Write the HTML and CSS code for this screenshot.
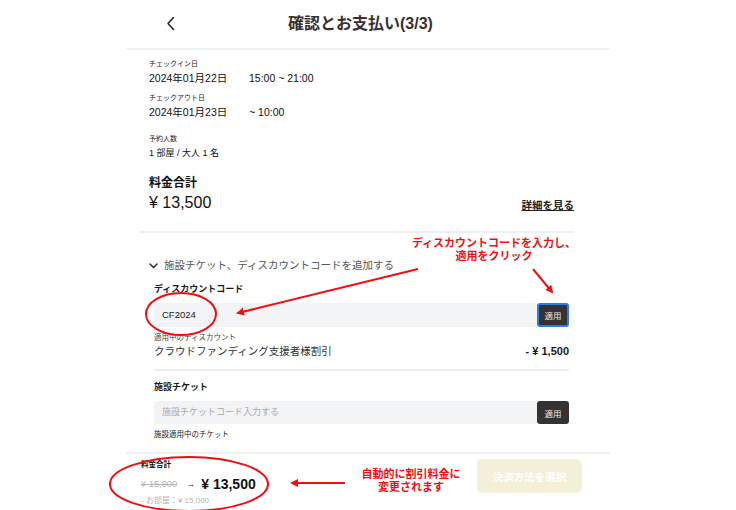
FILE: index.html
```html
<!DOCTYPE html>
<html lang="ja">
<head>
<meta charset="utf-8">
<title>確認とお支払い</title>
<link rel="stylesheet" href="styles.css">
</head>
<body>
<div class="page">
  <header class="topbar">
    <button class="back" aria-label="戻る">
      <svg width="9" height="15" viewBox="0 0 9 15"><path d="M7.5 1.5 L2 7.5 L7.5 13.5" fill="none" stroke="#2a2a2a" stroke-width="1.6" stroke-linecap="round" stroke-linejoin="round"/></svg>
    </button>
    <h1 class="title">確認とお支払い(3/3)</h1>
  </header>

  <section class="summary">
    <div class="label">チェックイン日</div>
    <div class="date-row"><span class="date">2024年01月22日</span><span>15:00 ~ 21:00</span></div>
    <div class="label gap-s">チェックアウト日</div>
    <div class="date-row"><span class="date">2024年01月23日</span><span>~ 10:00</span></div>
    <div class="label gap-m">予約人数</div>
    <div class="value">1 部屋 / 大人 1 名</div>
    <div class="total-label">料金合計</div>
    <div class="total-row">
      <span class="total-price">¥ 13,500</span>
      <a class="detail-link">詳細を見る</a>
    </div>
  </section>
  <div class="divider-top"></div>

  <section class="extras">
    <div class="toggle">
      <svg width="9" height="6" viewBox="0 0 9 6"><path d="M1 1 L4.5 4.6 L8 1" fill="none" stroke="#333" stroke-width="1.5" stroke-linecap="round" stroke-linejoin="round"/></svg>
      <span>施設チケット、ディスカウントコードを追加する</span>
    </div>
    <div class="inner">
      <div class="field-label">ディスカウントコード</div>
      <div class="input-row">
        <div class="input filled">CF2024</div>
        <button class="apply focused">適用</button>
      </div>
      <div class="small-label">適用中のディスカウント</div>
      <div class="discount-row">
        <span>クラウドファンディング支援者様割引</span>
        <span class="discount-amount">- ¥ 1,500</span>
      </div>
      <div class="divider-inner"></div>
      <div class="field-label gap-t">施設チケット</div>
      <div class="input-row second">
        <div class="input placeholder">施設チケットコード入力する</div>
        <button class="apply">適用</button>
      </div>
      <div class="small-label ticket">施設適用中のチケット</div>
    </div>
  </section>

  <footer class="footer">
    <div class="footer-price">
      <div class="footer-label">料金合計</div>
      <div class="price-change">
        <span class="old-price">¥ 15,000</span>
        <span class="arrow">→</span>
        <span class="new-price">¥ 13,500</span>
      </div>
      <div class="breakdown">- お部屋：¥ 15,000</div>
    </div>
    <button class="pay">決済方法を選択</button>
  </footer>
</div>

<div class="notes">
  <svg class="marks" width="736" height="510" viewBox="0 0 736 510">
    <defs>
      <marker id="head" markerWidth="8" markerHeight="8" refX="6" refY="4" orient="auto" markerUnits="userSpaceOnUse">
        <path d="M0 0 L8 4 L0 8 Z" fill="#f01010"/>
      </marker>
    </defs>
    <ellipse cx="181" cy="314" rx="35" ry="21" fill="none" stroke="#f01010" stroke-width="2"/>
    <ellipse cx="189" cy="484" rx="79" ry="27" fill="none" stroke="#f01010" stroke-width="2"/>
    <line x1="418" y1="269" x2="238" y2="313" stroke="#f01010" stroke-width="2" marker-end="url(#head)"/>
    <line x1="533" y1="269" x2="552" y2="292" stroke="#f01010" stroke-width="2" marker-end="url(#head)"/>
    <line x1="345" y1="483" x2="292" y2="483" stroke="#f01010" stroke-width="2" marker-end="url(#head)"/>
  </svg>
  <div class="note note-top">ディスカウントコードを入力し、<br>適用をクリック</div>
  <div class="note note-bottom">自動的に割引料金に<br>変更されます</div>
</div>
</body>
</html>
```

FILE: styles.css
```css
* { box-sizing: border-box; }
html, body { margin: 0; padding: 0; background: #fff; }
body {
  font-family: "Liberation Sans", "Noto Sans CJK JP", sans-serif;
  color: #111;
  position: relative;
  width: 736px;
  height: 510px;
  overflow: hidden;
}
.page {
  width: 484px;
  margin: 0 auto;
}
.topbar {
  height: 50px;
  border-bottom: 2px solid #f0f0f0;
  display: flex;
  align-items: center;
  padding-left: 40px;
}
.back {
  border: 0;
  background: none;
  padding: 0;
  width: 9px;
  height: 15px;
  display: flex;
  margin-top: -1px;
}
.title {
  margin: 0 0 0 113px;
  font-size: 16px;
  font-weight: 700;
  color: #3a3030;
  line-height: 20px;
}

.summary {
  padding: 8px 36px 0 23px;
}
.label {
  font-size: 7px;
  line-height: 12px;
  color: #222;
}
.gap-s { margin-top: 6px; }
.gap-m { margin-top: 13px; }
.date-row {
  font-size: 10.5px;
  line-height: 16px;
  display: flex;
  color: #111;
}
.date { width: 100px; }
.value {
  font-size: 9px;
  line-height: 16px;
  color: #111;
}
.total-label {
  margin-top: 13px;
  font-size: 12px;
  font-weight: 700;
  line-height: 18px;
}
.total-row {
  display: flex;
  justify-content: space-between;
  align-items: center;
  height: 22px;
}
.total-price {
  font-size: 16px;
  line-height: 22px;
}
.detail-link {
  font-size: 10.5px;
  font-weight: 700;
  text-decoration: underline;
  margin-top: 2px;
  color: #222;
}
.divider-top {
  margin: 17px 36px 0 13px;
  height: 2px;
  background: #f0f0f0;
}

.extras { padding: 0 41px 0 23px; }
.toggle {
  margin-top: 24px;
  display: flex;
  align-items: center;
  gap: 6px;
  font-size: 10.5px;
  line-height: 16px;
  color: #555;
}
.toggle svg { flex: none; margin-top: 1px; }
.inner { padding-left: 5px; }
.field-label {
  margin-top: 9px;
  font-size: 9px;
  font-weight: 700;
  line-height: 14px;
  color: #1a1a1a;
}
.gap-t { margin-top: 9px; }
.input-row {
  margin-top: 7px;
  display: flex;
  height: 24px;
}
.input-row.second { margin-top: 7px; height: 23px; }
.input {
  flex: 1;
  background: #f2f3f5;
  border-radius: 3px 0 0 3px;
  padding-left: 8px;
  font-size: 9.5px;
  line-height: 24px;
}
.input.filled { color: #222; }
.input.placeholder { color: #a9aaae; font-size: 9px; line-height: 23px; }
.apply {
  width: 32px;
  border: 0;
  background: #333;
  color: #eee;
  border-radius: 3px;
  font-family: inherit;
  font-size: 8.5px;
  padding: 0;
}
.apply.focused { border: 2px solid #2e7be6; }
.small-label {
  margin-top: 6px;
  font-size: 7.5px;
  line-height: 10px;
  color: #444;
}
.small-label.ticket { margin-top: 6px; color: #222; }
.discount-row {
  display: flex;
  justify-content: space-between;
  font-size: 10.5px;
  line-height: 16px;
  color: #333;
}
.discount-amount { font-weight: 700; font-size: 11px; color: #1a1a1a; }
.divider-inner {
  margin-top: 10px;
  height: 2px;
  background: #ededed;
}

.footer {
  margin-top: 12px;
  border-top: 2px solid #f0f0f0;
  display: flex;
  justify-content: space-between;
  align-items: flex-start;
  padding: 6px 28px 0 15px;
}
.footer-label {
  font-size: 7.5px;
  font-weight: 700;
  line-height: 10px;
}
.price-change {
  margin-top: 5px;
  display: flex;
  align-items: center;
  height: 18px;
}
.old-price {
  font-size: 9.3px;
  color: #b5b5b5;
  text-decoration: line-through;
}
.arrow {
  font-size: 9px;
  margin: 0 6px 0 9px;
  color: #222;
  font-weight: 700;
}
.new-price {
  font-size: 14px;
  font-weight: 700;
  color: #111;
}
.breakdown {
  margin-top: 3px;
  font-size: 8px;
  line-height: 10px;
  color: #b5b5b5;
}
.pay {
  width: 105px;
  height: 34px;
  margin-top: -1px;
  border: 0;
  border-radius: 5px;
  background: #f3efd9;
  color: #fff;
  font-family: inherit;
  font-weight: 700;
  font-size: 10.5px;
}

.notes {
  position: absolute;
  left: 0;
  top: 0;
  width: 736px;
  height: 510px;
  pointer-events: none;
}
.marks { position: absolute; left: 0; top: 0; }
.note {
  position: absolute;
  color: #f01010;
  font-weight: 700;
  font-size: 11px;
  line-height: 13px;
  text-align: center;
}
.note-top { left: 408px; top: 237px; width: 172px; }
.note-bottom { left: 356px; top: 468px; width: 110px; }
```
